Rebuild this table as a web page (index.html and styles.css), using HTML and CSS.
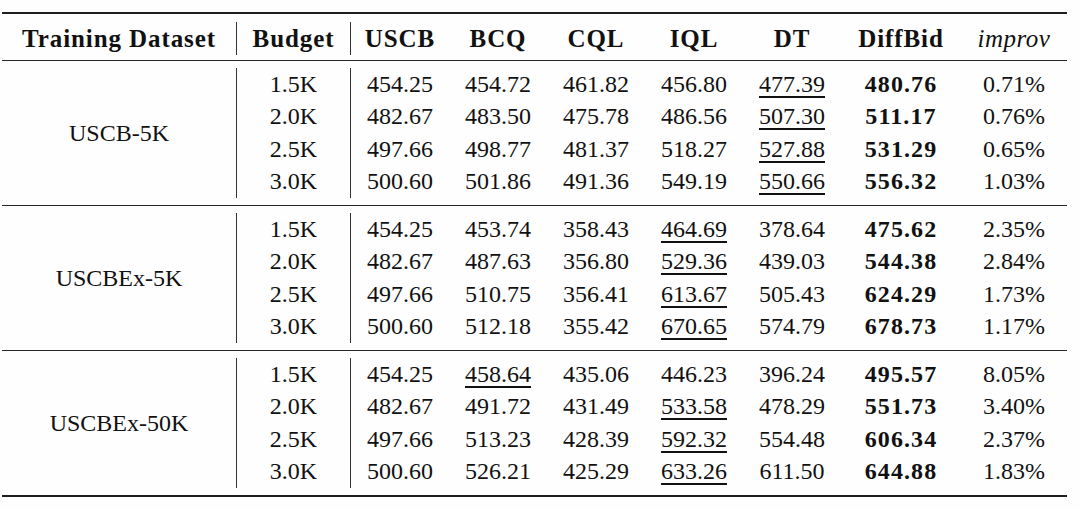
FILE: index.html
```html
<!DOCTYPE html>
<html>
<head>
<meta charset="utf-8">
<link rel="stylesheet" href="styles.css">
</head>
<body>
<div class="tbl">
  <div class="sec head">
    <div class="ds">Training Dataset</div>
    <div class="bud"><span>Budget</span></div>
    <div class="vals">
      <span>USCB</span><span>BCQ</span><span>CQL</span><span>IQL</span><span>DT</span><span>DiffBid</span><span class="it">improv</span>
    </div>
  </div>
  <div class="sec grp">
    <div class="ds">USCB-5K</div>
    <div class="bud"><span>1.5K</span><span>2.0K</span><span>2.5K</span><span>3.0K</span></div>
    <div class="vals">
      <span>454.25</span><span>454.72</span><span>461.82</span><span>456.80</span><span><u>477.39</u></span><span class="b">480.76</span><span>0.71%</span>
      <span>482.67</span><span>483.50</span><span>475.78</span><span>486.56</span><span><u>507.30</u></span><span class="b">511.17</span><span>0.76%</span>
      <span>497.66</span><span>498.77</span><span>481.37</span><span>518.27</span><span><u>527.88</u></span><span class="b">531.29</span><span>0.65%</span>
      <span>500.60</span><span>501.86</span><span>491.36</span><span>549.19</span><span><u>550.66</u></span><span class="b">556.32</span><span>1.03%</span>
    </div>
  </div>
  <div class="sec grp">
    <div class="ds">USCBEx-5K</div>
    <div class="bud"><span>1.5K</span><span>2.0K</span><span>2.5K</span><span>3.0K</span></div>
    <div class="vals">
      <span>454.25</span><span>453.74</span><span>358.43</span><span><u>464.69</u></span><span>378.64</span><span class="b">475.62</span><span>2.35%</span>
      <span>482.67</span><span>487.63</span><span>356.80</span><span><u>529.36</u></span><span>439.03</span><span class="b">544.38</span><span>2.84%</span>
      <span>497.66</span><span>510.75</span><span>356.41</span><span><u>613.67</u></span><span>505.43</span><span class="b">624.29</span><span>1.73%</span>
      <span>500.60</span><span>512.18</span><span>355.42</span><span><u>670.65</u></span><span>574.79</span><span class="b">678.73</span><span>1.17%</span>
    </div>
  </div>
  <div class="sec grp last">
    <div class="ds">USCBEx-50K</div>
    <div class="bud"><span>1.5K</span><span>2.0K</span><span>2.5K</span><span>3.0K</span></div>
    <div class="vals">
      <span>454.25</span><span><u>458.64</u></span><span>435.06</span><span>446.23</span><span>396.24</span><span class="b">495.57</span><span>8.05%</span>
      <span>482.67</span><span>491.72</span><span>431.49</span><span><u>533.58</u></span><span>478.29</span><span class="b">551.73</span><span>3.40%</span>
      <span>497.66</span><span>513.23</span><span>428.39</span><span><u>592.32</u></span><span>554.48</span><span class="b">606.34</span><span>2.37%</span>
      <span>500.60</span><span>526.21</span><span>425.29</span><span><u>633.26</u></span><span>611.50</span><span class="b">644.88</span><span>1.83%</span>
    </div>
  </div>
</div>
</body>
</html>
```

FILE: styles.css
```css
html, body {
  margin: 0;
  padding: 0;
  background: #fefefe;
}
body {
  font-family: "Liberation Serif", "Times New Roman", serif;
  font-size: 24px;
  color: #111;
}
.tbl {
  width: 1065px;
  margin: 12px 0 0 2px;
}
.sec {
  display: flex;
  border-bottom: 1px solid #262626;
  padding: 7px 0 7px;
}
.head {
  border-top: 2px solid #1e1e1e;
  padding: 8px 0 5px;
  font-weight: bold;
  font-size: 25px;
  letter-spacing: 0.9px;
}
.last {
  border-bottom: 2px solid #1e1e1e;
}
.ds {
  width: 234px;
  display: flex;
  align-items: center;
  justify-content: center;
}
.bud {
  width: 113px;
  border-left: 1px solid #333;
  display: grid;
  grid-auto-rows: 32.5px;
  align-items: center;
  justify-items: center;
}
.head .bud, .head .vals {
  grid-auto-rows: 33px;
}
.vals {
  flex: 1;
  border-left: 1px solid #333;
  display: grid;
  grid-template-columns: 98px 98px 98px 98px 98px 120px 1fr;
  grid-auto-rows: 32.5px;
  align-items: center;
  justify-items: center;
}
.it {
  font-style: italic;
  font-weight: normal;
  letter-spacing: 0.5px;
}
.b {
  font-weight: bold;
  letter-spacing: 1.1px;
}
u {
  text-decoration: underline;
  text-decoration-thickness: 1.5px;
  text-underline-offset: 4px;
}
```
